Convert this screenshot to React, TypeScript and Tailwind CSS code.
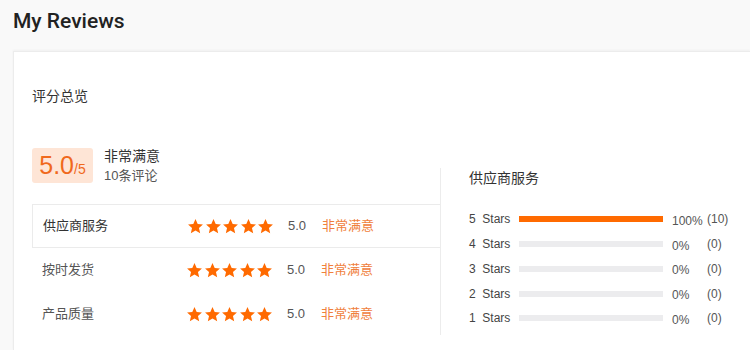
import React from 'react';

const CN = "font-['Liberation_Sans','Noto_Sans_CJK_SC',sans-serif]";

const ROWS = [
  { label: '供应商服务', score: '5.0', text: '非常满意', active: true },
  { label: '按时发货', score: '5.0', text: '非常满意', active: false },
  { label: '产品质量', score: '5.0', text: '非常满意', active: false },
];

const DIST = [
  { stars: 5, pct: 100, count: 10 },
  { stars: 4, pct: 0, count: 0 },
  { stars: 3, pct: 0, count: 0 },
  { stars: 2, pct: 0, count: 0 },
  { stars: 1, pct: 0, count: 0 },
];

function Star() {
  return (
    <svg viewBox="0 0 24 24" className="w-[17px] h-[17px]" fill="#ff6a00">
      <path d="M12 1.5l3.1 6.9 7.4.7-5.6 5 1.7 7.4L12 17.6l-6.6 3.9 1.7-7.4-5.6-5 7.4-.7z" />
    </svg>
  );
}

export default function App() {
  return (
    <div className={`w-[750px] h-[350px] overflow-hidden bg-[#f9f9f9] ${CN}`}>
      {/* Header */}
      <div className="h-[51px] pl-[13px] pt-[6px]">
        <h1 className="font-['Roboto',sans-serif] text-[21px] font-medium text-[#222] leading-[30px]">
          My Reviews
        </h1>
      </div>

      {/* Card */}
      <div className="ml-[13px] h-[299px] bg-white border-l border-t border-[#ececec] shadow-[0_-1px_2px_rgba(0,0,0,0.04)] pl-[18px]">
        <div className="pt-[34px] text-[14px] leading-[20px] text-[#333]">评分总览</div>

        <div className="flex mt-[42px]">
          {/* Left */}
          <div className="w-[408px]">
            <div className="flex items-start gap-[11px] h-[35px]">
              <div className="w-[61px] h-[35px] rounded-[3px] bg-[#fee5d6] flex items-baseline justify-center pt-[1px]">
                <span className="text-[25px] leading-[33px] text-[#f0691c]">5.0</span>
                <span className="text-[14px] text-[#f0691c]">/5</span>
              </div>
              <div className="-mt-[2px]">
                <div className="text-[14px] leading-[20px] text-[#333]">非常满意</div>
                <div className="text-[13px] leading-[19px] text-[#555]">10条评论</div>
              </div>
            </div>

            <div className="mt-[21px]">
              {ROWS.map((r) => (
                <div
                  key={r.label}
                  className={`flex items-center h-[44px] pl-[10px] ${
                    r.active ? 'border border-r-0 border-[#ebebeb]' : ''
                  }`}
                >
                  <div className={`w-[144px] text-[13px] ${r.active ? 'text-[#333]' : 'text-[#555]'}`}>{r.label}</div>
                  <div className="flex gap-[0.5px]">
                    {[0, 1, 2, 3, 4].map((i) => (
                      <Star key={i} />
                    ))}
                  </div>
                  <div className="ml-[14px] w-[34px] text-[13px] text-[#555]">{r.score}</div>
                  <div className="text-[13px] text-[#f0803c]">{r.text}</div>
                </div>
              ))}
            </div>
          </div>

          {/* Right */}
          <div className="mt-[20px] h-[167px] border-l border-[#ececec] pl-[28px]">
            <div className="text-[14px] leading-[20px] text-[#333]">供应商服务</div>
            <div className="mt-[19px]">
              {DIST.map((d) => (
                <div key={d.stars} className="flex items-center h-[24.75px] text-[12px] text-[#444]">
                  <div className="w-[50px]">
                    {d.stars}&nbsp; Stars
                  </div>
                  <div className="w-[144px] h-[6px] bg-[#ececee]">
                    <div className="h-full bg-[#ff6a00]" style={{ width: `${d.pct}%` }} />
                  </div>
                  <div className="ml-[9px] w-[35px] mt-[3px] text-[#555]">{d.pct}%</div>
                  <div className="text-[#555]">({d.count})</div>
                </div>
              ))}
            </div>
          </div>
        </div>
      </div>
    </div>
  );
}
